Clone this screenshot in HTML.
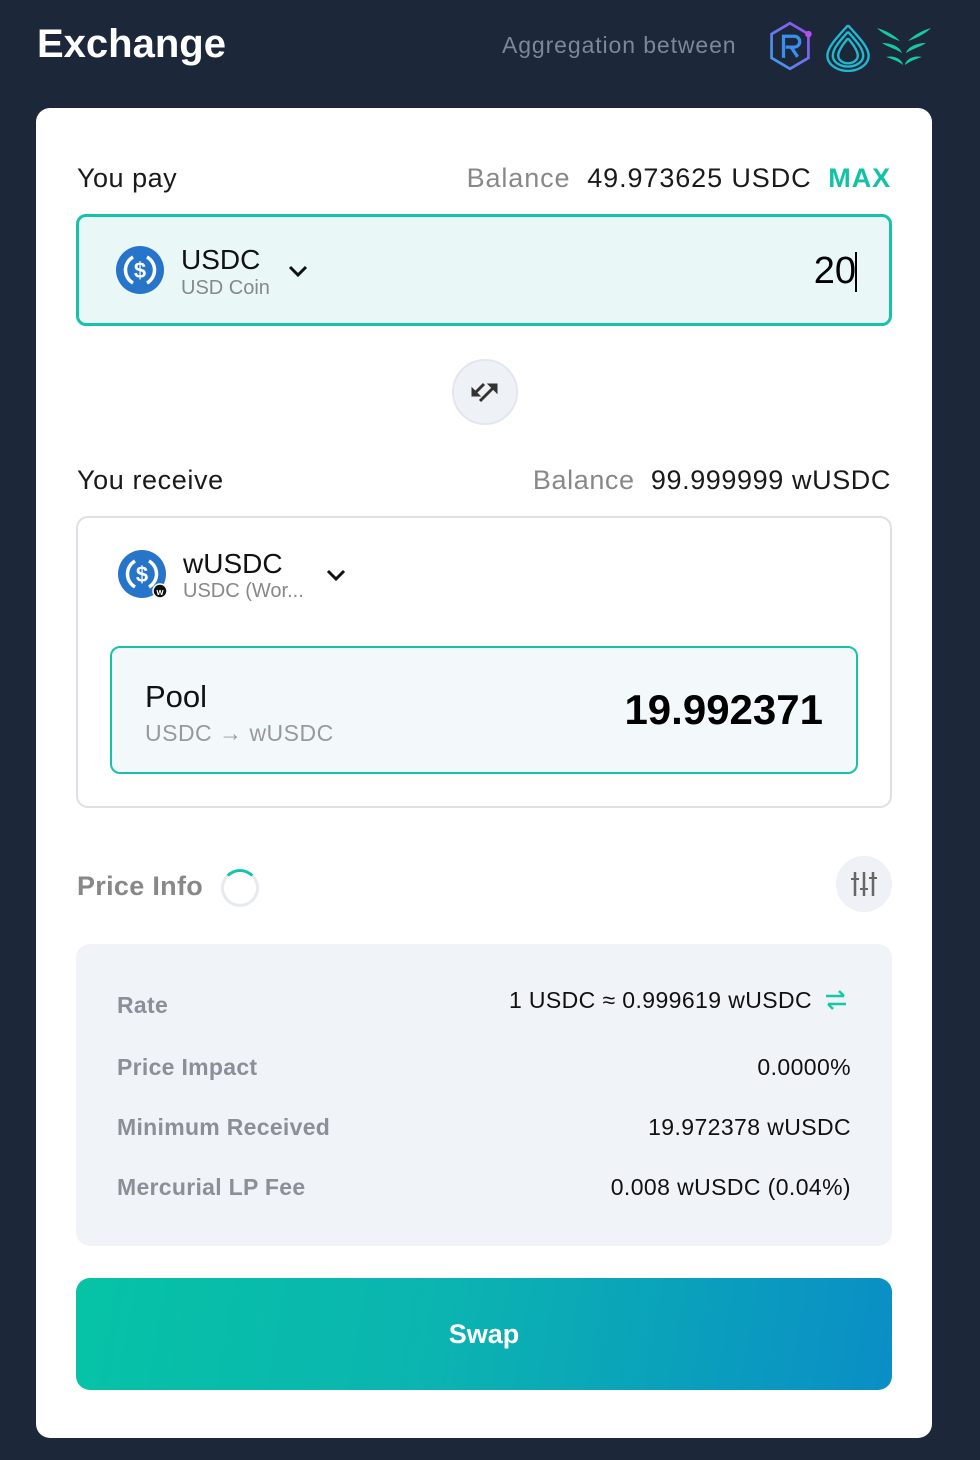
<!DOCTYPE html>
<html><head><meta charset="utf-8"><style>
*{box-sizing:border-box;margin:0;padding:0}
body{width:980px;height:1460px;background:#1d273a;font-family:"Liberation Sans",sans-serif;position:relative;overflow:hidden}
.abs{position:absolute}
.card{position:absolute;left:36px;top:108px;width:896px;height:1330px;background:#fff;border-radius:14px}
.lbl{position:absolute;left:117px;font-size:23px;color:#8a8f98;font-weight:bold;letter-spacing:.3px}
.val{position:absolute;right:129px;font-size:23px;color:#111;letter-spacing:.4px}
</style></head><body>
<div class="abs" style="left:37px;top:22px;font-size:40px;font-weight:bold;color:#fff">Exchange</div>
<div class="abs" style="left:502px;top:32px;font-size:23px;color:#7c8797;letter-spacing:.9px">Aggregation between</div>
<svg class="abs" style="left:766px;top:20px" width="48" height="52" viewBox="0 0 44 48">
<defs><linearGradient id="rg" x1="0" y1="1" x2="1" y2="0"><stop offset="0" stop-color="#3aa0e8"/><stop offset="1" stop-color="#9a4cf0"/></linearGradient></defs>
<path d="M22 3 L39 13 L39 35 L22 45 L5 35 L5 13 Z" fill="none" stroke="url(#rg)" stroke-width="2.5"/>
<circle cx="39" cy="13" r="3" fill="#b64ff0"/>
<path d="M16 35 V15 H26 a5 5 0 0 1 0 10 H18 M23 25 L29 34" fill="none" stroke="#3a8ef0" stroke-width="3"/>
</svg>
<svg class="abs" style="left:824px;top:22px" width="48" height="50" viewBox="0 0 44 46">
<g fill="none" stroke="#20b7cf" stroke-width="2.2">
<path d="M22 3 C10 16 3 24 3 31 a19 14 0 0 0 38 0 C41 24 34 16 22 3"/>
<path d="M22 9 C13 19 8 25 8 31 a14 10 0 0 0 28 0 C36 25 31 19 22 9"/>
<path d="M22 15 C16 22 13 27 13 31 a9 7 0 0 0 18 0 C31 27 28 22 22 15"/></g></svg>
<svg class="abs" style="left:876px;top:24px" width="56" height="44" viewBox="0 0 56 42" fill="#15c9a4">
<path d="M1 3 C12 6 20 12 24 16 C18 14 8 10 1 3Z"/><path d="M55 3 C44 6 36 12 32 16 C38 14 48 10 55 3Z"/>
<path d="M6 18 C16 18 24 22 26 28 C20 24 12 22 6 18Z"/><path d="M50 18 C40 18 32 22 30 28 C36 24 44 22 50 18Z"/>
<path d="M10 32 C18 30 26 34 27 40 C22 36 16 34 10 32Z"/><path d="M46 32 C38 30 30 34 29 40 C34 36 40 34 46 32Z"/></svg>

<div class="card"></div>
<div class="abs" style="left:77px;top:163px;font-size:27px;color:#1a1a1a;letter-spacing:.5px">You pay</div>
<div class="abs" style="right:89px;top:163px;font-size:27px;color:#1a1a1a;white-space:nowrap;letter-spacing:.9px"><span style="color:#888">Balance</span>&nbsp; 49.973625 USDC&nbsp; <b style="color:#13c2a6">MAX</b></div>
<div class="abs" style="left:76px;top:214px;width:816px;height:112px;border:3px solid #17c2aa;border-radius:10px;background:#e9f8f6"></div>
<svg class="abs" style="left:115px;top:245px" width="50" height="50" viewBox="0 0 50 50"><circle cx="25" cy="25" r="24" fill="#2775ca"/><path d="M18 12 a15 15 0 0 0 0 26 M32 12 a15 15 0 0 1 0 26" fill="none" stroke="#fff" stroke-width="3.5"/><text x="25" y="33" text-anchor="middle" font-size="22" font-weight="bold" fill="#fff" font-family="Liberation Sans">$</text></svg>
<div class="abs" style="left:181px;top:244px;font-size:28px;color:#111">USDC</div>
<div class="abs" style="left:181px;top:277px;font-size:20px;color:#888">USD Coin</div>
<svg class="abs" style="left:288px;top:264px" width="20" height="14"><path d="M2 3 L10 11 L18 3" fill="none" stroke="#111" stroke-width="3"/></svg>
<div class="abs" style="right:124px;top:250px;font-size:38px;color:#000">20</div>
<div class="abs" style="left:855px;top:252px;width:2px;height:40px;background:#000"></div>

<div class="abs" style="left:452px;top:359px;width:66px;height:66px;border-radius:50%;background:#eef1f6;border:2px solid #e2e6ee"></div>
<svg class="abs" style="left:470px;top:377px" width="30" height="30" viewBox="0 0 30 30" stroke="#333" stroke-width="3" fill="#333"><path d="M14 7 L4 17" /><path d="M2 19 L2 11 L10 19Z" stroke-width="1"/><path d="M10 24 L24 10"/><path d="M27 7 L27 16 L18 7Z" stroke-width="1"/></svg>

<div class="abs" style="left:77px;top:465px;font-size:27px;color:#1a1a1a;letter-spacing:.6px">You receive</div>
<div class="abs" style="right:89px;top:465px;font-size:27px;color:#1a1a1a;white-space:nowrap;letter-spacing:.6px"><span style="color:#888">Balance</span>&nbsp; 99.999999 wUSDC</div>
<div class="abs" style="left:76px;top:516px;width:816px;height:292px;border:2px solid #dcdfe4;border-radius:12px"></div>
<svg class="abs" style="left:117px;top:549px" width="52" height="52" viewBox="0 0 52 52"><circle cx="25" cy="25" r="24" fill="#2775ca"/><path d="M18 12 a15 15 0 0 0 0 26 M32 12 a15 15 0 0 1 0 26" fill="none" stroke="#fff" stroke-width="3.5"/><text x="25" y="33" text-anchor="middle" font-size="22" font-weight="bold" fill="#fff" font-family="Liberation Sans">$</text><circle cx="43" cy="42" r="7" fill="#111" stroke="#fff" stroke-width="1.5"/><text x="43" y="46" text-anchor="middle" font-size="9" fill="#fff" font-weight="bold">w</text></svg>
<div class="abs" style="left:183px;top:548px;font-size:28px;color:#111">wUSDC</div>
<div class="abs" style="left:183px;top:580px;font-size:20px;color:#888">USDC (Wor...</div>
<svg class="abs" style="left:326px;top:568px" width="20" height="14"><path d="M2 3 L10 11 L18 3" fill="none" stroke="#111" stroke-width="3"/></svg>
<div class="abs" style="left:110px;top:646px;width:748px;height:128px;border:2px solid #17c2aa;border-radius:10px;background:#f3f9fb"></div>
<div class="abs" style="left:145px;top:679px;font-size:31px;color:#111">Pool</div>
<div class="abs" style="left:145px;top:720px;font-size:23px;color:#999;letter-spacing:.5px">USDC → wUSDC</div>
<div class="abs" style="right:157px;top:686px;font-size:42px;font-weight:bold;color:#000">19.992371</div>

<div class="abs" style="left:77px;top:871px;font-size:27px;font-weight:bold;color:#888;letter-spacing:.3px">Price Info</div>
<div class="abs" style="left:221px;top:869px;width:38px;height:38px;border-radius:50%;border:3px solid #e6e9ee;border-top-color:#17c2aa"></div>
<div class="abs" style="left:836px;top:856px;width:56px;height:56px;border-radius:50%;background:#eef1f6"></div>
<svg class="abs" style="left:850px;top:870px" width="28" height="28" viewBox="0 0 28 28" stroke="#666" stroke-width="2.5"><path d="M5 2V26M14 2V26M23 2V26"/><path d="M1 9H9M10 19H18M19 8H27" stroke-width="2"/></svg>

<div class="abs" style="left:76px;top:944px;width:816px;height:302px;background:#f0f3f8;border-radius:14px"></div>
<div class="lbl" style="top:992px">Rate</div>
<div class="lbl" style="top:1054px">Price Impact</div>
<div class="lbl" style="top:1114px">Minimum Received</div>
<div class="lbl" style="top:1174px">Mercurial LP Fee</div>
<div class="abs" style="right:168px;top:987px;font-size:23px;color:#111;letter-spacing:.4px">1 USDC ≈ 0.999619 wUSDC</div>
<svg class="abs" style="left:824px;top:990px" width="24" height="20" viewBox="0 0 24 20" stroke="#15c9a4" stroke-width="2.5" fill="none"><path d="M2 6H20M15 1L20 6M22 14H4M9 19L4 14"/></svg>
<div class="val" style="top:1054px">0.0000%</div>
<div class="val" style="top:1114px">19.972378 wUSDC</div>
<div class="val" style="top:1174px">0.008 wUSDC (0.04%)</div>

<div class="abs" style="left:76px;top:1278px;width:816px;height:112px;border-radius:14px;background:linear-gradient(100deg,#06c3a6 0%,#0bb4b0 45%,#0a8ec6 100%);color:#fff;font-size:27px;font-weight:bold;text-align:center;line-height:112px">Swap</div>
</body></html>
